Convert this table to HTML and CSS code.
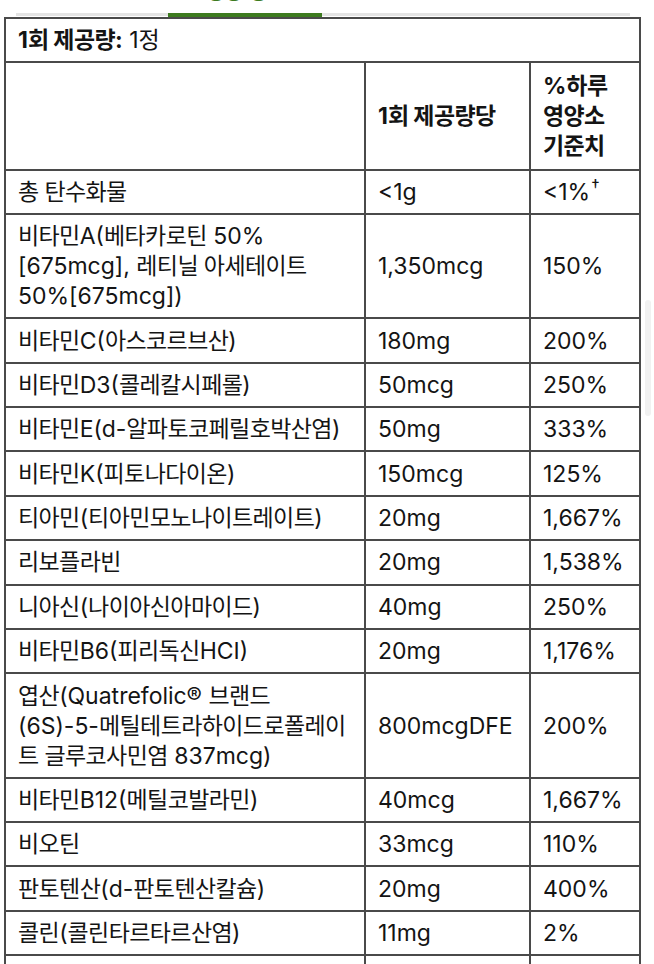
FILE: index.html
```html
<!DOCTYPE html>
<html lang="ko">
<head>
<meta charset="utf-8">
<title>영양 정보</title>
<link rel="stylesheet" href="styles.css">
</head>
<body>
<div class="tabs">
  <div class="tab-labels"><span class="tab-label">영양 정보</span></div>
  <div class="tab-track"><div class="tab-active"></div></div>
</div>
<table class="facts">
  <colgroup>
    <col class="c-name">
    <col class="c-amt">
    <col class="c-dv">
  </colgroup>
  <tr>
    <td colspan="3" class="serving"><b>1<span class="k">회 제공량</span>:</b> 1<span class="k">정</span></td>
  </tr>
  <tr class="head">
    <td></td>
    <td class="th">1<span class="k">회 제공량당</span></td>
    <td class="th nw">%<span class="k">하루</span><br><span class="k">영양소</span><br><span class="k">기준치</span></td>
  </tr>
  <tr><td><span class="k">총 탄수화물</span></td><td>&lt;1g</td><td>&lt;1%<sup class="dag">†</sup></td></tr>
  <tr><td class="nw"><span class="k">비타민</span>A(<span class="k">베타카로틴</span> 50%<br>[675mcg], <span class="k">레티닐 아세테이트</span><br>50%[675mcg])</td><td>1,350mcg</td><td>150%</td></tr>
  <tr><td><span class="k">비타민</span>C(<span class="k">아스코르브산</span>)</td><td>180mg</td><td>200%</td></tr>
  <tr><td><span class="k">비타민</span>D3(<span class="k">콜레칼시페롤</span>)</td><td>50mcg</td><td>250%</td></tr>
  <tr><td class="nw"><span class="k">비타민</span>E(d-<span class="k">알파토코페릴호박산염</span>)</td><td>50mg</td><td>333%</td></tr>
  <tr><td><span class="k">비타민</span>K(<span class="k">피토나다이온</span>)</td><td>150mcg</td><td>125%</td></tr>
  <tr><td class="nw"><span class="k">티아민</span>(<span class="k">티아민모노나이트레이트</span>)</td><td>20mg</td><td>1,667%</td></tr>
  <tr><td><span class="k">리보플라빈</span></td><td>20mg</td><td>1,538%</td></tr>
  <tr><td><span class="k">니아신</span>(<span class="k">나이아신아마이드</span>)</td><td>40mg</td><td>250%</td></tr>
  <tr><td><span class="k">비타민</span>B6(<span class="k">피리독신</span>HCI)</td><td>20mg</td><td>1,176%</td></tr>
  <tr><td class="nw"><span class="k">엽산</span>(Quatrefolic® <span class="k">브랜드</span><br>(6S)-5-<span class="k">메틸테트라하이드로폴레이</span><br><span class="k">트 글루코사민염</span> 837mcg)</td><td>800mcgDFE</td><td>200%</td></tr>
  <tr><td><span class="k">비타민</span>B12(<span class="k">메틸코발라민</span>)</td><td>40mcg</td><td>1,667%</td></tr>
  <tr><td><span class="k">비오틴</span></td><td>33mcg</td><td>110%</td></tr>
  <tr><td><span class="k">판토텐산</span>(d-<span class="k">판토텐산칼슘</span>)</td><td>20mg</td><td>400%</td></tr>
  <tr><td><span class="k">콜린</span>(<span class="k">콜린타르타르산염</span>)</td><td>11mg</td><td>2%</td></tr>
  <tr><td>&nbsp;</td><td>&nbsp;</td><td>&nbsp;</td></tr>
</table>
<div class="scroll-hint"></div>
</body>
</html>
```
FILE: styles.css
```css
html, body {
  margin: 0;
  padding: 0;
  background: #ffffff;
}

body {
  font-family: "Inter", "Noto Sans CJK KR", sans-serif;
  color: #141414;
  overflow: hidden;
  height: 964px;
}

.tabs {
  width: 654px;
}

.tab-labels {
  height: 13px;
  overflow: hidden;
}

.tab-label {
  display: block;
  margin-left: 206px;
  margin-top: -19px;
  font-size: 20px;
  line-height: 20px;
  font-weight: 700;
  color: #3d7b1f;
  font-family: "Noto Sans CJK KR", sans-serif;
}

.tab-track {
  margin: 1px 24px 0 16px;
  height: 3px;
  background: #e4e4e4;
}

.tab-active {
  margin-left: 152px;
  margin-top: -1px;
  width: 154px;
  height: 4px;
  background: #3d7b1f;
}

.facts {
  border-collapse: collapse;
  table-layout: fixed;
  width: 635px;
  margin-left: 4px;
  margin-top: 1px;
  font-size: 23px;
  color: #141414;
}

.c-name { width: 360px; }
.c-amt { width: 165px; }
.c-dv { width: 110px; }

.facts td {
  border: 2px solid #4a4a4a;
  padding: 6.2px 12px;
  line-height: 30px;
  vertical-align: middle;
  text-align: left;
  font-weight: 400;
}

.facts td.nw {
  white-space: nowrap;
}

.facts .serving {
  padding-top: 6px;
  padding-bottom: 6px;
}

.facts .head td {
  padding-top: 7.8px;
  padding-bottom: 7.8px;
}

.k {
  letter-spacing: -0.6px;
}

.facts b,
.facts .th {
  font-weight: 700;
}

.dag {
  font-size: 17px;
  line-height: 0;
  vertical-align: 8px;
  margin-left: 1px;
}

.scroll-hint {
  position: absolute;
  left: 645px;
  top: 300px;
  width: 6px;
  height: 116px;
  border-radius: 3px;
  background: #f1f1f1;
}
```
